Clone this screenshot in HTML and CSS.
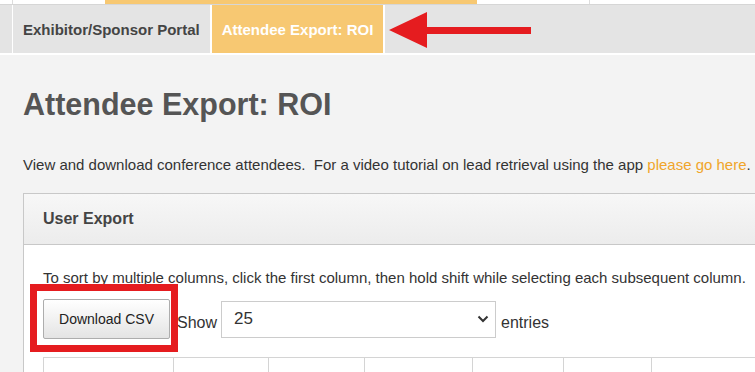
FILE: index.html
```html
<!DOCTYPE html>
<html lang="en">
<head>
<meta charset="UTF-8">
<meta name="viewport" content="width=device-width, initial-scale=1.0">
<title>Attendee Export: ROI</title>
<link rel="stylesheet" href="styles.css">
</head>
<body>

<div class="top-strip">
    <span class="strip-cell strip-edge"></span>
    <span class="strip-cell strip-plain"></span>
    <span class="strip-cell strip-active"></span>
    <span class="strip-cell strip-plain2"></span>
    <span class="strip-cell strip-rest"></span>
</div>

<div class="tab-bar">
    <span class="tab-edge"></span>
    <a class="tab" href="#">Exhibitor/Sponsor Portal</a>
    <a class="tab tab-active" href="#">Attendee Export: ROI</a>
    <svg class="arrow" width="146" height="40" viewBox="0 0 146 40">
        <polygon points="0,18 38,0 38,15 142,15 142,22 38,22 38,36" fill="#e51c1f"/>
    </svg>
</div>

<div class="main">
    <h1>Attendee Export: ROI</h1>
    <p class="intro">View and download conference attendees.&nbsp; For a video tutorial on lead retrieval using the app <a href="#">please go here</a>.</p>

    <div class="panel">
        <div class="panel-heading">User Export</div>
        <div class="panel-body">
            <p class="hint">To sort by multiple columns, click the first column, then hold shift while selecting each subsequent column.</p>
            <div class="toolbar">
                <span class="marked">
                    <button class="btn">Download CSV</button>
                </span>
                <label class="show">Show</label>
                <div class="select">
                    <span>25</span>
                    <svg width="12" height="8" viewBox="0 0 12 8">
                        <path d="M1.5 1.5 L6 6 L10.5 1.5" fill="none" stroke="#333" stroke-width="2"/>
                    </svg>
                </div>
                <label class="show entries">entries</label>
            </div>
            <table class="grid">
                <tr>
                    <th class="c1"></th>
                    <th class="c2"></th>
                    <th class="c3"></th>
                    <th class="c4"></th>
                    <th class="c5"></th>
                    <th class="c6"></th>
                    <th class="c7"></th>
                </tr>
            </table>
        </div>
    </div>
</div>

</body>
</html>
```

FILE: styles.css
```css
body {
    margin: 0;
    font-family: "Liberation Sans", Arial, sans-serif;
    background-color: #f3f3f3;
    color: #333;
    overflow: hidden;
    width: 1000px;
}
.top-strip {
    display: flex;
    height: 4px;
    background-color: #fff;
    border-bottom: 1px solid #d6d6d6;
}
.strip-cell {
    display: block;
}
.strip-edge {
    width: 12px;
    border-right: 1px solid #ddd;
}
.strip-plain {
    width: 92px;
}
.strip-active {
    width: 372px;
    background-color: #f7c872;
}
.strip-plain2 {
    width: 112px;
    border-right: 1px solid #ddd;
}
.strip-rest {
    flex: 1;
}
.tab-bar {
    position: relative;
    display: flex;
    height: 48px;
    background-color: #e4e4e4;
    border-bottom: 2px solid #fff;
}
.tab-edge {
    width: 12px;
    border-right: 1px solid #fff;
}
.tab {
    display: flex;
    align-items: center;
    padding: 0 10px;
    font-size: 15px;
    font-weight: bold;
    color: #444;
    text-decoration: none;
    border-right: 2px solid #fff;
}
.tab-active {
    background-color: #f7c872;
    color: #fff;
}
.arrow {
    position: absolute;
    left: 389px;
    top: 7px;
}
.main {
    padding: 0 23px;
}
h1 {
    margin: 31px 0 0;
    font-size: 30.5px;
    line-height: 36px;
    color: #555;
}
.intro {
    margin: 33px 0 0;
    font-size: 15px;
    line-height: 20px;
}
.intro a {
    color: #f0a52a;
    text-decoration: none;
}
.panel {
    margin-top: 18px;
    border: 1px solid #c8c8c8;
    border-right: none;
    background-color: #fff;
}
.panel-heading {
    height: 50px;
    line-height: 50px;
    padding-left: 19px;
    font-size: 16px;
    font-weight: bold;
    color: #444;
    background: linear-gradient(#f7f7f7, #ececec);
    border-bottom: 1px solid #c8c8c8;
}
.panel-body {
    padding: 23px 19px 0;
}
.hint {
    margin: 0;
    font-size: 15px;
    line-height: 20px;
}
.toolbar {
    display: flex;
    align-items: center;
    margin-top: 11px;
}
.marked {
    position: relative;
}
.marked::after {
    content: "";
    position: absolute;
    top: -15px;
    left: -13px;
    right: -8px;
    bottom: -13px;
    border: 7px solid #e51c1f;
}
.btn {
    display: block;
    width: 127px;
    height: 40px;
    font-family: "Liberation Sans", Arial, sans-serif;
    font-size: 14px;
    color: #222;
    background: linear-gradient(#ffffff, #e4e4e4);
    border: 1px solid #adadad;
    border-radius: 2px;
}
.show {
    padding: 7px 4px 0 7px;
    font-size: 16px;
}
.entries {
    padding-left: 5px;
}
.select {
    display: flex;
    align-items: center;
    justify-content: space-between;
    width: 255px;
    height: 35px;
    padding: 0 6px 0 12px;
    border: 1px solid #ccc;
    font-size: 17px;
    background-color: #fff;
}
.grid {
    margin-top: 18px;
    border-collapse: collapse;
}
.grid th {
    height: 40px;
    padding: 0;
    border: 1px solid #d4d4d4;
    border-bottom: none;
}
.c1 { width: 129px; }
.c2 { width: 94px; }
.c3 { width: 95px; }
.c4 { width: 107px; }
.c5 { width: 90px; }
.c6 { width: 87px; }
.c7 { width: 200px; }
```
